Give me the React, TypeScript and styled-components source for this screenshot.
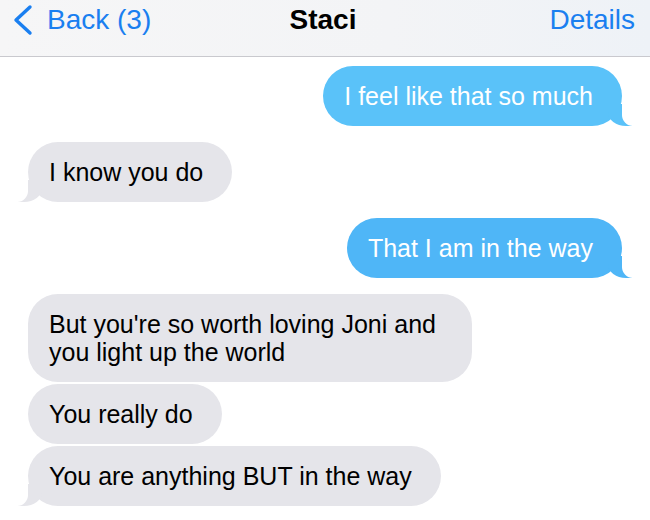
import React from "react";
import styled, { createGlobalStyle, css } from "styled-components";

const GlobalStyle = createGlobalStyle`
  html, body {
    margin: 0;
    padding: 0;
    background: #ffffff;
    overflow: hidden;
  }
  body {
    width: 650px;
    height: 520px;
    font-family: "Liberation Sans", Arial, sans-serif;
  }
`;

type Message = {
  text: string;
  out: boolean;
  tail: boolean;
  color?: string;
};

const groups: Message[][] = [
  [{ text: "I feel like that so much", out: true, tail: true, color: "#5ac2f9" }],
  [{ text: "I know you do", out: false, tail: true }],
  [{ text: "That I am in the way", out: true, tail: true, color: "#4fb6f7" }],
  [
    { text: "But you're so worth loving Joni and you light up the world", out: false, tail: false },
    { text: "You really do", out: false, tail: false },
    { text: "You are anything BUT in the way", out: false, tail: true },
  ],
];

const App: React.FC = () => {
  return (
    <>
      <GlobalStyle />
      <Screen>
        <NavBar>
          <BackButton>
            <svg width="24" height="32" viewBox="0 0 24 32">
              <path
                d="M19 3 L5 16 L19 29"
                fill="none"
                stroke="#1a7ff0"
                strokeWidth="3.4"
                strokeLinecap="round"
                strokeLinejoin="round"
              />
            </svg>
            <NavLink>Back (3)</NavLink>
          </BackButton>
          <Title>Staci</Title>
          <DetailsButton>
            <NavLink>Details</NavLink>
          </DetailsButton>
        </NavBar>
        <Thread>
          {groups.map((group, gi) => (
            <Group key={gi}>
              {group.map((m, mi) => (
                <Bubble
                  key={mi}
                  $out={m.out}
                  $tail={m.tail}
                  $bg={m.out ? m.color || "#55bbf8" : "#e5e5ea"}
                >
                  {m.text}
                </Bubble>
              ))}
            </Group>
          ))}
        </Thread>
      </Screen>
    </>
  );
};

const Screen = styled.div`
  width: 650px;
  height: 520px;
  display: flex;
  flex-direction: column;
`;

const NavBar = styled.header`
  display: grid;
  grid-template-columns: 1fr auto 1fr;
  align-items: start;
  height: 57px;
  box-sizing: border-box;
  border-bottom: 1px solid #c9c9ce;
  background: linear-gradient(to right, #f6f6f7, #f3f4f6 60%, #eef2f7);
  padding: 0 15px 0 11px;
`;

const BackButton = styled.div`
  display: flex;
  align-items: center;
  gap: 12px;
  height: 40px;
`;

const DetailsButton = styled.div`
  display: flex;
  justify-content: flex-end;
`;

const NavLink = styled.span`
  color: #1a7ff0;
  font-size: 28px;
  line-height: 40px;
`;

const Title = styled.h1`
  margin: 0;
  font-size: 28px;
  line-height: 40px;
  font-weight: 700;
  color: #000;
`;

const Thread = styled.main`
  display: flex;
  flex-direction: column;
  gap: 16px;
  padding: 9px 28px 0 28px;
`;

const Group = styled.div`
  display: flex;
  flex-direction: column;
  gap: 2px;
`;

const Bubble = styled.div<{ $out: boolean; $tail: boolean; $bg: string }>`
  position: relative;
  max-width: 444px;
  box-sizing: border-box;
  padding: 16px 29px 16px 21px;
  border-radius: 30px;
  font-size: 25px;
  line-height: 28px;
  background: ${(p) => p.$bg};
  color: ${(p) => (p.$out ? "#ffffff" : "#000000")};
  align-self: ${(p) => (p.$out ? "flex-end" : "flex-start")};

  ${(p) =>
    p.$tail &&
    css`
      &::before {
        content: "";
        position: absolute;
        bottom: 0;
        ${p.$out ? "right: -10px;" : "left: -10px;"}
        width: 24px;
        height: 22px;
        background: ${p.$bg};
        ${p.$out
          ? "border-bottom-left-radius: 18px 14px;"
          : "border-bottom-right-radius: 18px 14px;"}
      }
      &::after {
        content: "";
        position: absolute;
        bottom: 0;
        ${p.$out ? "right: -12px;" : "left: -12px;"}
        width: 12px;
        height: 24px;
        background: #ffffff;
        ${p.$out
          ? "border-bottom-left-radius: 11px;"
          : "border-bottom-right-radius: 11px;"}
      }
    `}
`;

export default App;
